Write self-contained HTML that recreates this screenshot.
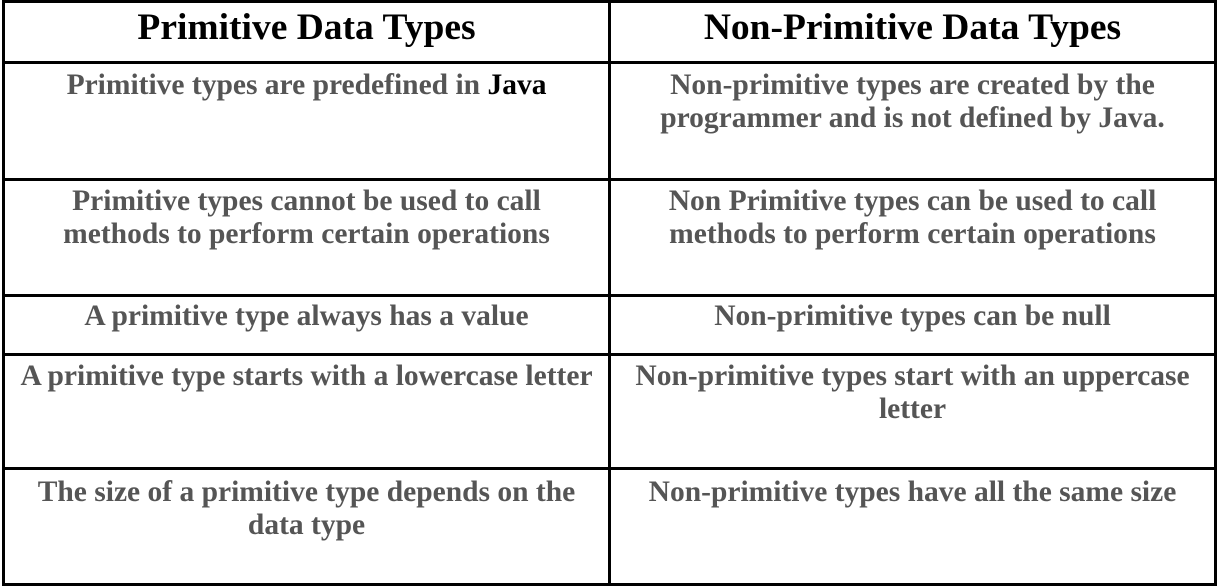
<!DOCTYPE html>
<html><head><style>
body{margin:0;width:1219px;height:588px;background:#fff;position:relative;overflow:hidden;font-family:"Liberation Serif",serif;font-weight:bold}
.h{position:absolute;background:#000;height:3px;left:2px;width:1215px}
.v{position:absolute;background:#000;width:3px;top:0;height:586px}
.t{position:absolute;text-align:center;color:#555;font-size:29.5px;line-height:33px;white-space:nowrap}
.hd{position:absolute;text-align:center;color:#000;font-size:37.5px;line-height:42px;top:7px;white-space:nowrap}
</style></head><body>
<div class="h" style="top:0"></div>
<div class="h" style="top:61px"></div>
<div class="h" style="top:178px"></div>
<div class="h" style="top:294px"></div>
<div class="h" style="top:353px"></div>
<div class="h" style="top:467px"></div>
<div class="h" style="top:583px"></div>
<div class="v" style="left:2px"></div>
<div class="v" style="left:608px"></div>
<div class="v" style="left:1214px"></div>
<div class="hd" style="left:5px;width:603px">Primitive Data Types</div>
<div class="hd" style="left:611px;width:603px">Non-Primitive Data Types</div>
<div class="t" style="left:5px;width:603px;top:69px">Primitive types are predefined in <span style="color:#000">Java</span></div>
<div class="t" style="left:611px;width:603px;top:69px">Non-primitive types are created by the<br>programmer and is not defined by Java.</div>
<div class="t" style="left:5px;width:603px;top:185px">Primitive types cannot be used to call<br>methods to perform certain operations</div>
<div class="t" style="left:611px;width:603px;top:185px">Non Primitive types can be used to call<br>methods to perform certain operations</div>
<div class="t" style="left:5px;width:603px;top:300px">A primitive type always has a value</div>
<div class="t" style="left:611px;width:603px;top:300px">Non-primitive types can be null</div>
<div class="t" style="left:5px;width:603px;top:360px">A primitive type starts with a lowercase letter</div>
<div class="t" style="left:611px;width:603px;top:360px">Non-primitive types start with an uppercase<br>letter</div>
<div class="t" style="left:5px;width:603px;top:476px">The size of a primitive type depends on the<br>data type</div>
<div class="t" style="left:611px;width:603px;top:476px">Non-primitive types have all the same size</div>
</body></html>
